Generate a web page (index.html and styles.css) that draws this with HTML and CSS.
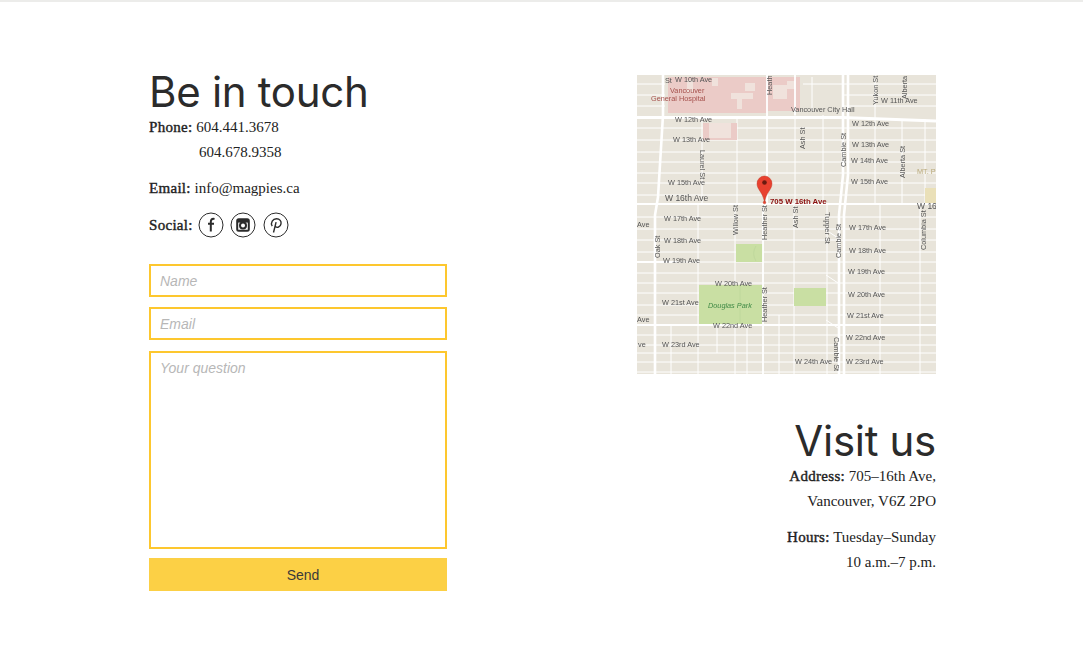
FILE: index.html
```html
<!DOCTYPE html>
<html lang="en">
<head>
<meta charset="utf-8">
<title>Be in touch</title>
<link rel="stylesheet" href="styles.css">
</head>
<body>
<main class="page">
  <section class="contact">
    <h1 class="title">Be in touch</h1>
    <p class="info phones"><b>Phone:</b> 604.441.3678<br><span class="second">604.678.9358</span></p>
    <p class="info"><b>Email:</b> info@magpies.ca</p>
    <div class="info social"><b class="social-label">Social:</b>
      <svg class="icon" viewBox="0 0 26 26"><circle cx="13" cy="13" r="12"/><path class="thick" d="M16.500 7c-2.600-.6-3.700.6-3.700 3V19.500M10 11.800h6"/></svg>
      <svg class="icon" viewBox="0 0 26 26"><circle cx="13" cy="13" r="12"/><rect class="thick" x="7.200" y="7.200" width="11.600" height="11.600" rx="1.500"/><circle class="thick" cx="13" cy="13.400" r="3"/><path class="fat" d="M7.500 9.200h11"/></svg>
      <svg class="icon" viewBox="0 0 26 26"><circle cx="13" cy="13" r="12"/><path class="mid" d="M10.500 20.500l2.600-10.400M9.200 14.200c-2-3.600.6-7.400 4.300-7.400 3.400 0 5 2.500 4.500 5-.5 2.800-3.600 4.700-5.600 2.800"/></svg>
    </div>
    <form class="form">
      <input class="field" type="text" placeholder="Name">
      <input class="field" type="text" placeholder="Email">
      <textarea class="field area" placeholder="Your question"></textarea>
      <button class="send" type="button">Send</button>
    </form>
  </section>
  <section class="visit">
    <svg class="map" viewBox="0 0 299 299">
      <rect class="land" width="299" height="299"/>
      <path class="lane" d="M0 9H28M0 20H28M0 31H28M166 9H299M205 20H299M205 31H299M0 53H299M0 65H299M0 77H299M0 87H299M0 98H299M0 108H299M0 120H299M0 142H299M0 154H299M0 165H299M0 177H299M0 187H299M0 198H299M0 208H299M0 218H299M0 230H299M0 240H299M0 260H299M0 270H299M0 278H299M0 287H299M0 297H299"/>
      <path class="lane" d="M65 44V128M100 44V128M158 40V128M186 40V128M238 0V128M265 44V128M288 44V128M175 2V36M61 128V299M98 128V299M157 128V299M190 128V299M243 128V299M283 128V299M34 250V299M80 250V278M110 250V299M142 240V299"/>
      <path class="pink" d="M31 2h100v36H31zM131 2h32v34h-32zM66 48h34v17H66z"/>
      <path class="pale" d="M50 5h6v12H50zM75 3h6v8H75zM108 8h10v8h-10zM94 18h22v6H94zM100 24h5v10h-5zM136 10h14v14h-14zM150 6h8v8h-8zM72 48h22v15H72z"/>
      <path class="park" d="M62 210h63v39H62zM99 169h27v18H99zM157 213h32v18h-32z"/>
      <path class="park-line" d="M103 210v39M119 171c-3 5-3 10 0 15"/>
      <path class="tan" d="M288 113h11v15h-11z"/>
      <path class="street" d="M0 129H299M0 250H299M0 187H40M130 0V128L126 132V299M158 0V40"/>
      <path class="arterial" d="M26 0V40L21 122L18 140V299M206 0V100L202 140V299M211 0V100L207 140V299"/>
      <path class="blank" d="M0 42.500H205L299 46"/>
      <path class="lane" d="M189 155l12 8M189 200l12 8M189 245l12 8"/>
      <text class="lbl" x="38" y="6.500">W 10th Ave</text>
      <text class="lbl" x="38" y="47">W 12th Ave</text>
      <text class="lbl" x="215" y="51">W 12th Ave</text>
      <text class="lbl" x="244" y="28">W 11th Ave</text>
      <text class="lbl" x="36" y="67">W 13th Ave</text>
      <text class="lbl" x="215" y="72">W 13th Ave</text>
      <text class="lbl" x="214" y="88">W 14th Ave</text>
      <text class="lbl" x="31" y="110">W 15th Ave</text>
      <text class="lbl" x="214" y="109">W 15th Ave</text>
      <text class="lbl big" x="28" y="126">W 16th Ave</text>
      <text class="lbl big" x="280" y="134">W 16</text>
      <text class="lbl" x="27" y="146">W 17th Ave</text>
      <text class="lbl" x="212" y="155">W 17th Ave</text>
      <text class="lbl" x="0" y="152">Ave</text>
      <text class="lbl" x="27" y="168">W 18th Ave</text>
      <text class="lbl" x="212" y="178">W 18th Ave</text>
      <text class="lbl" x="26" y="188">W 19th Ave</text>
      <text class="lbl" x="211" y="199">W 19th Ave</text>
      <text class="lbl" x="78" y="211">W 20th Ave</text>
      <text class="lbl" x="211" y="222">W 20th Ave</text>
      <text class="lbl" x="25" y="230">W 21st Ave</text>
      <text class="lbl" x="0" y="247">Ave</text>
      <text class="lbl" x="210" y="243">W 21st Ave</text>
      <text class="lbl" x="76" y="253">W 22nd Ave</text>
      <text class="lbl" x="209" y="265">W 22nd Ave</text>
      <text class="lbl" x="25" y="272">W 23rd Ave</text>
      <text class="lbl" x="1" y="272">ve</text>
      <text class="lbl" x="209" y="289">W 23rd Ave</text>
      <text class="lbl" x="158" y="289">W 24th Ave</text>
      <text class="lbl" x="154" y="37">Vancouver City Hall</text>
      <text class="lbl" x="28" y="8">St</text>
      <text class="lbl" transform="translate(63 75) rotate(90)">Laurel St</text>
      <text class="lbl" transform="translate(209 92) rotate(-90)">Cambie St</text>
      <text class="lbl" transform="translate(204 183) rotate(-90)">Cambie St</text>
      <text class="lbl" transform="translate(197 262) rotate(90)">Cambie St</text>
      <text class="lbl" transform="translate(130 247) rotate(-90)">Heather St</text>
      <text class="lbl" transform="translate(130 165) rotate(-90)">Heather St</text>
      <text class="lbl" transform="translate(135 20) rotate(-90)">Heath</text>
      <text class="lbl" transform="translate(168 74) rotate(-90)">Ash St</text>
      <text class="lbl" transform="translate(161 153) rotate(-90)">Ash St</text>
      <text class="lbl" transform="translate(268 103) rotate(-90)">Alberta St</text>
      <text class="lbl" transform="translate(270 24) rotate(-90)">Alberta</text>
      <text class="lbl" transform="translate(241 30) rotate(-90)">Yukon St</text>
      <text class="lbl" transform="translate(23 183) rotate(-90)">Oak St</text>
      <text class="lbl" transform="translate(289 175) rotate(-90)">Columbia St</text>
      <text class="lbl" transform="translate(101 160) rotate(-90)">Willow St</text>
      <text class="lbl" transform="translate(188 137) rotate(90)">Tupper St</text>
      <text class="lbl hospital" x="33" y="18">Vancouver</text>
      <text class="lbl hospital" x="14" y="26">General Hospital</text>
      <text class="lbl greenlbl" x="71" y="233">Douglas Park</text>
      <text class="lbl mt" x="280" y="99">MT. P</text>
      <path class="pin" d="M127.500 127.500C126 117 120 115 120 108.500a7.500 7.500 0 0 1 15 0C135 115 129 117 127.500 127.500z"/>
      <circle class="pin-dot" cx="127.500" cy="107.500" r="2.300"/>
      <circle class="pin" cx="127.500" cy="127.500" r="1.300"/>
      <text class="pin-label" x="133" y="129">705 W 16th Ave</text>
    </svg>
    <h2 class="title title-right">Visit us</h2>
    <p class="info phones"><b>Address:</b> 705–16th Ave,<br>Vancouver, V6Z 2PO</p>
    <p class="info"><b>Hours:</b> Tuesday–Sunday<br>10 a.m.–7 p.m.</p>
  </section>
</main>
</body>
</html>
```

FILE: styles.css
```css
* { box-sizing: border-box; }
html, body { margin: 0; padding: 0; background: #fff; }
body { height: 667px; overflow: hidden; border-top: 2px solid #ececea; }
.page { display: flex; justify-content: space-between; padding: 66px 147px 0 149px; color: #2c2c2c; }
.contact { width: 298px; }
.visit { width: 299px; text-align: right; padding-top: 7px; }
.title { margin: 0; font: 400 42px/47px Inter, "Liberation Sans", sans-serif; color: #2b2b2b; letter-spacing: -.3px; }
.title-right { margin-top: 43px; }
.info { margin: 0 0 11px; font: 400 15px/25px "Liberation Serif", serif; color: #222; }
.info b { font-weight: 400; letter-spacing: .3px; -webkit-text-stroke: .4px #222; }
.second { padding-left: 50px; }
.social { display: flex; align-items: center; gap: 7.500px; margin-top: 0; height: 26px; }
.social-label { margin-right: -1.500px; }
.icon { width: 26px; height: 26px; margin-left: -1px; fill: none; stroke: #2b2b2b; stroke-width: 1; }
.icon .thick { stroke-width: 2; }
.icon .mid { stroke-width: 1.400; }
.icon .fat { stroke-width: 2.800; }
.form { display: flex; flex-direction: column; gap: 10px; margin-top: 26px; }
.field { display: block; width: 298px; height: 33px; border: 2px solid #fdc72e; border-radius: 0; padding: 0 9px; background: #fff; font: 14px/20px "Liberation Sans", sans-serif; outline: none; resize: none; }
.field::placeholder { color: #b7b7b7; font-style: italic; opacity: 1; }
.area { height: 198px; padding-top: 5px; margin-top: 1px; }
.send { height: 33px; width: 298px; margin-top: -1px; border: 0; background: #fcd045; color: #3a3a3a; font: 14px "Liberation Sans", sans-serif; padding: 0 0 0 10px; }
.map { display: block; width: 299px; height: 299px; filter: blur(.3px); }
.land { fill: #e8e4da; }
.pink { fill: #ebcbc7; }
.pale { fill: #f0e2dc; }
.park { fill: #c9dfa3; }
.park-line { fill: none; stroke: #bdd69b; stroke-width: .8; }
.tan { fill: #eae0b8; }
.lane, .street, .arterial, .blank { fill: none; stroke: #fff; }
.lane { stroke-width: 1; }
.street { stroke-width: 1.800; }
.arterial { stroke-width: 2.600; }
.blank { stroke-width: 3.200; }
.lbl { font: 7.300px "Liberation Sans", sans-serif; fill: #555; }
.big { font-size: 8.500px; }
.hospital { fill: #a5504c; }
.greenlbl { fill: #3f8a45; font-style: italic; }
.mt { fill: #b9a97a; }
.pin { fill: #e8412f; stroke: #b9301f; stroke-width: .4; }
.pin-dot { fill: #6a1a10; }
.pin-label { font: 700 7.800px "Liberation Sans", sans-serif; fill: #8b0f0f; }
```
